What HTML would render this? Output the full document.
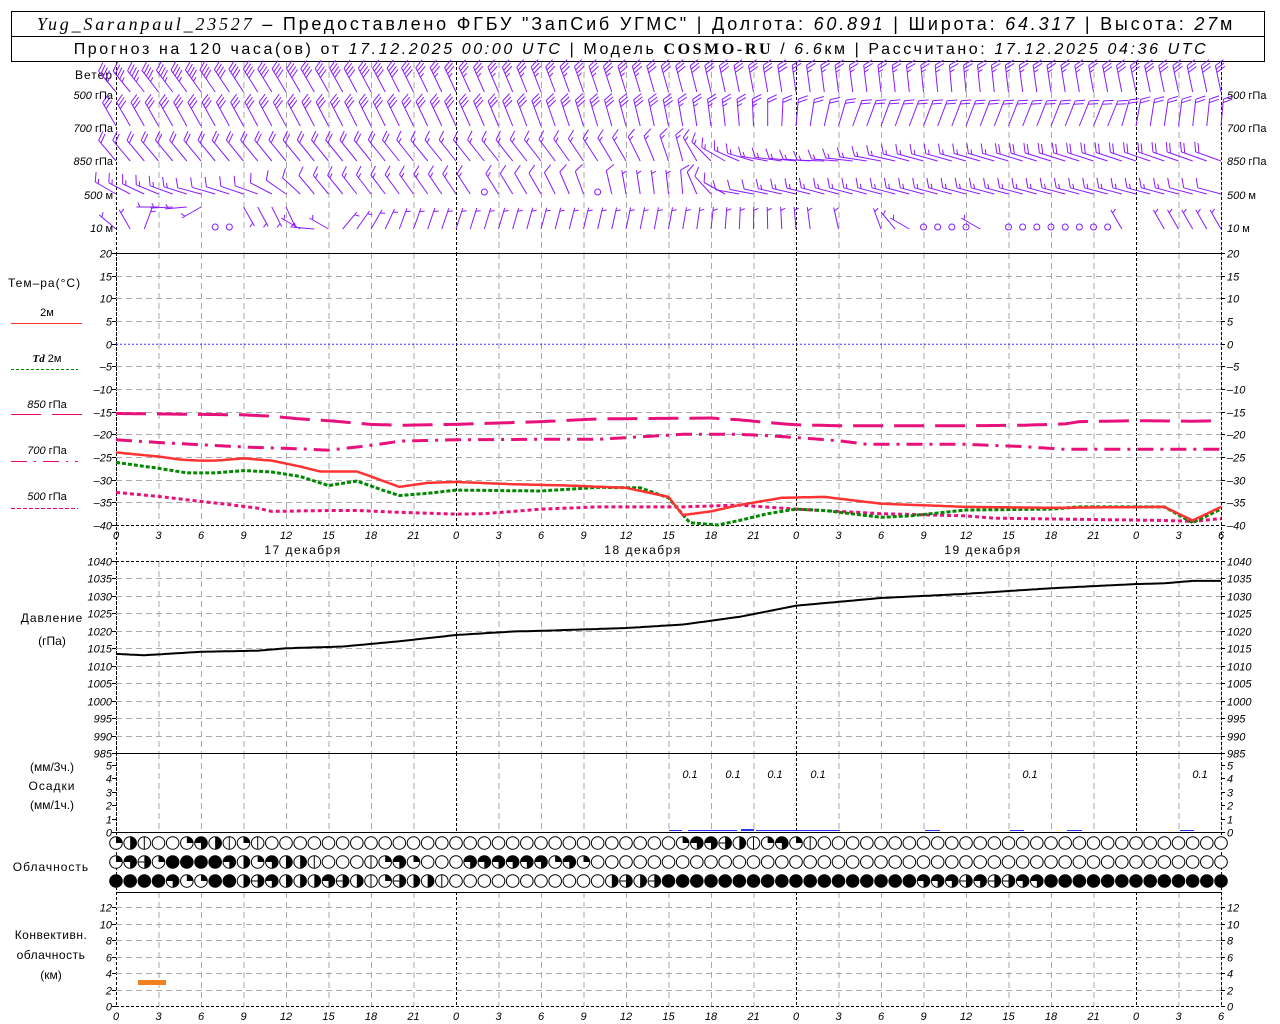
<!DOCTYPE html>
<html><head><meta charset="utf-8"><style>
html,body{margin:0;padding:0;background:#fff;width:1280px;height:1024px;overflow:hidden}
svg{display:block}
text{font-family:"Liberation Sans",sans-serif;fill:#000}
.ax{font-style:italic;font-size:11px}
.lb{font-size:12px}
</style></head><body>
<svg id="s" width="1280" height="1024" viewBox="0 0 1280 1024" xmlns="http://www.w3.org/2000/svg">
<rect x="11.5" y="11.5" width="1253" height="50" fill="none" stroke="#000"/>
<line x1="11" y1="36.5" x2="1265" y2="36.5" stroke="#000"/>
<text x="636" y="30" text-anchor="middle" font-size="18" letter-spacing="2.8"><tspan font-family="Liberation Serif" font-style="italic">Yug_Saranpaul_23527</tspan> – Предоставлено ФГБУ "ЗапСиб УГМС" | Долгота: <tspan font-style="italic">60.891</tspan> | Широта: <tspan font-style="italic">64.317</tspan> | Высота: <tspan font-style="italic">27</tspan>м</text>
<text x="641" y="54" text-anchor="middle" font-size="16" letter-spacing="2.6">Прогноз на 120 часа(ов) от <tspan font-style="italic">17.12.2025 00:00 UTC</tspan>  | Модель <tspan font-family="Liberation Serif" font-weight="bold">COSMO-RU</tspan> / <tspan font-style="italic">6.6</tspan>км | Рассчитано: <tspan font-style="italic">17.12.2025 04:36 UTC</tspan></text>

<g class="lb">
<text x="113" y="79" text-anchor="end" letter-spacing="1">Ветер</text>
<text x="8" y="287" letter-spacing="1">Тем–ра(°С)</text>
<text x="47" y="316" text-anchor="middle" font-size="11">2м</text>
<line x1="11" y1="323.5" x2="82" y2="323.5" stroke="#f33" stroke-width="1"/>
<text x="47" y="362" text-anchor="middle" font-size="11"><tspan font-style="italic" font-weight="bold" font-family="Liberation Serif">Td</tspan>  2м</text>
<line x1="11" y1="369.5" x2="78" y2="369.5" stroke="#080" stroke-dasharray="3,2"/>
<text x="47" y="408" text-anchor="middle" font-size="11"><tspan font-style="italic">850</tspan> гПа</text>
<line x1="11" y1="414.5" x2="82" y2="414.5" stroke="#e07" stroke-dasharray="30,11"/>
<text x="47" y="454" text-anchor="middle" font-size="11"><tspan font-style="italic">700</tspan> гПа</text>
<line x1="11" y1="461.5" x2="78" y2="461.5" stroke="#e07" stroke-dasharray="16,7,2,7"/>
<text x="47" y="500" text-anchor="middle" font-size="11"><tspan font-style="italic">500</tspan> гПа</text>
<line x1="11" y1="508.5" x2="78" y2="508.5" stroke="#e07" stroke-dasharray="4,2"/>
<text x="52" y="622" text-anchor="middle" letter-spacing="1">Давление</text>
<text x="52" y="645" text-anchor="middle">(гПа)</text>
<text x="52" y="771" text-anchor="middle">(мм/3ч.)</text>
<text x="52" y="790" text-anchor="middle" letter-spacing="1">Осадки</text>
<text x="52" y="809" text-anchor="middle">(мм/1ч.)</text>
<text x="51" y="871" text-anchor="middle" letter-spacing="1">Облачность</text>
<text x="51" y="939" text-anchor="middle" letter-spacing="0.5">Конвективн.</text>
<text x="51" y="959" text-anchor="middle" letter-spacing="0.5">облачность</text>
<text x="51" y="979" text-anchor="middle">(км)</text>
</g>
<g id="dyn"></g>
</svg>
<script>
var X0=116,HX=340/24;
function hx(h){return X0+h*HX;}
var o=[];
function L(x1,y1,x2,y2,st){o.push('<line x1="'+x1.toFixed(1)+'" y1="'+y1.toFixed(1)+'" x2="'+x2.toFixed(1)+'" y2="'+y2.toFixed(1)+'" '+st+'/>');}
function T(x,y,t,a,extra){o.push('<text class="ax" x="'+x+'" y="'+y+'" text-anchor="'+(a||'start')+'" '+(extra||'')+'>'+t+'</text>');}
var R=1221;
function vgrid(y1,y2){for(var h=0;h<=78;h+=3){var x=hx(h)+0.5;var day=(h%24==0);L(x,y1,x,y2,'stroke="'+(day?'#000':'#aaa')+'" stroke-dasharray="'+(day?'3,2':'6,4')+'"');}}
vgrid(62,253);vgrid(253,525);vgrid(561,753);vgrid(753,832);vgrid(892,1006);
L(R+0.5,62,R+0.5,1006,'stroke="#000" stroke-dasharray="3,2"');
L(X0+0.5,62,X0+0.5,1006,'stroke="#000" stroke-dasharray="3,2"');
function ty(t){return 253+(20-t)*272/60;}
for(var t=20;t>=-40;t-=5){var y=Math.round(ty(t))+0.5;
 if(t<20&&t>-40&&t!=0)L(X0,y,R,y,'stroke="#aaa" stroke-dasharray="6,4"');
 L(X0-4,y,X0,y,'stroke="#000"');L(R,y,R+4,y,'stroke="#000"');
 T(X0-4,y+4,t==0?'0':(t<0?'–'+(-t):t),'end');T(R+6,y+4,t==0?'0':(t<0?'–'+(-t):t));}
L(X0,ty(0)+0.5,R,ty(0)+0.5,'stroke="#33f" stroke-dasharray="2,2"');
L(X0,253.5,R,253.5,'stroke="#000"');L(X0,525.5,R,525.5,'stroke="#000" stroke-dasharray="3,2"');
function xlabels(y){for(var h=0;h<=78;h+=3){T(hx(h),y,String(h%24),'middle','font-size="13"');}}
xlabels(539);xlabels(1020);
T(303,554,'17 декабря','middle','style="font-style:normal;font-size:12px" letter-spacing="1.5"');
T(643,554,'18 декабря','middle','style="font-style:normal;font-size:12px" letter-spacing="1.5"');
T(983,554,'19 декабря','middle','style="font-style:normal;font-size:12px" letter-spacing="1.5"');
function py(p){return 561+(1040-p)*192/55;}
for(var p=1040;p>=985;p-=5){var y=Math.round(py(p))+0.5;
 if(p<1040&&p>985)L(X0,y,R,y,'stroke="#aaa" stroke-dasharray="6,4"');
 L(X0-4,y,X0,y,'stroke="#000"');L(R,y,R+4,y,'stroke="#000"');
 T(X0-4,y+4,p,'end','font-size="10"');T(R+6,y+4,p,'start','font-size="10"');}
L(X0,561.5,R,561.5,'stroke="#000" stroke-dasharray="3,2"');
L(X0,753.5,R,753.5,'stroke="#000"');
for(var k=0;k<=5;k++){var y=Math.round(832-k*13.4)+0.5;L(X0-4,y,X0,y,'stroke="#000"');L(R,y,R+4,y,'stroke="#000"');T(X0-4,y+4,k,'end','font-size="10"');T(R+6,y+4,k,'start','font-size="10"');}
L(X0,832.5,R,832.5,'stroke="#000"');
[690,733,775,818,1030,1200].forEach(function(x){T(x,778,'0.1','middle','font-size="12"');});
[[669,682,1],[688,737,1],[741,754,2],[756,840,1],[925,940,1],[1010,1024,1],[1067,1082,1],[1180,1194,1]].forEach(function(b){o.push('<rect x="'+b[0]+'" y="'+(831-b[2])+'" width="'+(b[1]-b[0])+'" height="'+b[2]+'" fill="#23f"/>');});
for(var k=0;k<=12;k+=2){var y=Math.round(1006-k*8.25)+0.5;
 if(k>0)L(X0,y,R,y,'stroke="#aaa" stroke-dasharray="6,4"');
 L(X0-4,y,X0,y,'stroke="#000"');L(R,y,R+4,y,'stroke="#000"');T(X0-4,y+4,k,'end','font-size="10"');T(R+6,y+4,k,'start','font-size="10"');}
L(X0,892.5,R,892.5,'stroke="#000"');L(X0,1006.5,R,1006.5,'stroke="#000" stroke-dasharray="3,2"');
o.push('<rect x="138" y="980" width="28" height="5" fill="#f08020"/>');
function interp(k,h){for(var i=0;i<k.length-1;i++){if(h<=k[i+1][0]){var f=(h-k[i][0])/(k[i+1][0]-k[i][0]);return k[i][1]+f*(k[i+1][1]-k[i][1]);}}return k[k.length-1][1];}
function curve(k,fy,st){var d='';for(var h=0;h<=78;h+=0.25){d+=(h==0?'M':'L')+hx(h).toFixed(1)+','+fy(interp(k,h)).toFixed(1);}o.push('<path d="'+d+'" fill="none" '+st+'/>');}
var t850=[[0,-15.4],[9,-15.7],[11,-16],[13,-16.6],[15,-17],[18,-17.8],[20,-18],[24,-17.8],[30,-17.2],[34,-16.6],[42,-16.4],[44,-16.8],[46,-17.4],[48,-17.9],[51,-18.1],[60,-18.1],[64,-18],[67,-17.7],[68,-17.2],[72,-17],[76,-17.1],[78,-17]];
var t700=[[0,-21.2],[3,-21.8],[9,-22.8],[13,-23.2],[15,-23.5],[17,-22.8],[19,-22],[20,-21.5],[24,-21.2],[30,-21.1],[34,-21.1],[40,-20],[44,-20],[46,-20.3],[48,-20.7],[51,-21.4],[53,-22.2],[60,-22.2],[64,-22.7],[67,-23.3],[78,-23.3]];
var t500=[[0,-32.8],[3,-33.7],[6,-34.8],[8,-35.5],[10,-36.3],[11,-37],[15,-36.8],[17,-36.8],[20,-37.2],[24,-37.6],[26,-37.5],[30,-36.5],[34,-36],[40,-36],[44,-35.6],[48,-36.5],[54,-37.5],[60,-38],[62,-38.5],[74,-39],[76,-39.2],[78,-38.6]];
var td=[[0,-26.2],[3,-27.5],[5,-28.5],[7,-28.5],[9,-28],[11,-28.3],[13,-29.3],[15,-31.3],[17,-30.3],[19,-32.5],[20,-33.5],[22,-33],[24,-32.3],[30,-32.5],[34,-31.7],[37,-31.8],[39,-34],[40.5,-39.5],[42.5,-40],[44,-39],[46,-37.5],[48,-36.5],[50,-36.8],[54,-38.3],[56,-38],[60,-36.7],[66,-36.5],[68,-36],[74,-36],[76,-39.5],[78,-36.5]];
var t2=[[0,-24],[3,-24.9],[4.6,-25.6],[6,-25.8],[7,-25.8],[9,-25.3],[11,-25.8],[13,-27.1],[14.4,-28.2],[17,-28.2],[18,-29.3],[20,-31.6],[22,-30.7],[24,-30.5],[28,-31],[32,-31.3],[36,-31.8],[39,-33.8],[40,-37.8],[42,-37],[44,-35.6],[47,-34],[50,-33.8],[54,-35.3],[60,-36],[66,-36.2],[74,-36],[76,-39],[78,-36]];
curve(t850,ty,'stroke="#e8107a" stroke-width="3" stroke-dasharray="30,11"');
curve(t700,ty,'stroke="#e8107a" stroke-width="3" stroke-dasharray="16,7,3,7"');
curve(t500,ty,'stroke="#e8107a" stroke-width="3" stroke-dasharray="4,3"');
curve(td,ty,'stroke="#080" stroke-width="3" stroke-dasharray="4,2"');
curve(t2,ty,'stroke="#f33" stroke-width="2.5"');
var pr=[[0,1013.4],[2,1013],[6,1014],[10,1014.3],[12,1015],[16,1015.5],[20,1017],[24,1018.8],[28,1019.8],[30,1020],[36,1020.8],[40,1021.8],[44,1024],[48,1027.2],[54,1029.4],[60,1030.6],[66,1032.2],[72,1033.4],[74,1033.6],[76,1034.3],[78,1034.3]];
curve(pr,py,'stroke="#000" stroke-width="2"');
var PC='#8a1aff';
function barb(x,y,d,sp,len){
 if(sp<2.5){o.push('<circle cx="'+x+'" cy="'+y+'" r="3" fill="none" stroke="'+PC+'"/>');return;}
 var r=d*Math.PI/180,ux=Math.sin(r),uy=-Math.cos(r);
 var tx=x+len*ux,ty2=y+len*uy;L(x,y,tx,ty2,'stroke="'+PC+'"');
 var fr=(d+65)*Math.PI/180,fx=Math.sin(fr),fy=-Math.cos(fr);
 var s=Math.round(sp/5)*5,pos=0,fl=10;
 while(s>=50){var ax=tx-ux*pos,ay=ty2-uy*pos,bx=tx-ux*(pos+5),by=ty2-uy*(pos+5);
  o.push('<polygon points="'+ax+','+ay+' '+(ax+fx*fl)+','+(ay+fy*fl)+' '+bx+','+by+'" fill="'+PC+'"/>');pos+=7;s-=50;}
 while(s>=10){var ax=tx-ux*pos,ay=ty2-uy*pos;L(ax,ay,ax+fx*fl,ay+fy*fl,'stroke="'+PC+'"');pos+=3.5;s-=10;}
 if(s>=5){if(pos==0)pos=3.5;var ax=tx-ux*pos,ay=ty2-uy*pos;L(ax,ay,ax+fx*fl/2,ay+fy*fl/2,'stroke="'+PC+'"');}
}
var rows=[
 {y:92,len:27,d:[[0,320],[10,328],[24,335],[40,345],[48,352],[60,355],[72,348],[78,348]],s:[[0,45],[12,40],[30,35],[44,30],[50,25],[62,25],[78,30]]},
 {y:126,len:27,d:[[0,330],[12,332],[24,335],[36,345],[44,355],[48,365],[52,380],[70,382],[72,370],[78,365]],s:[[0,30],[20,30],[36,30],[48,20],[78,20]]},
 {y:161,len:27,d:[[0,320],[30,322],[36,330],[40,345],[43,300],[46,280],[50,272],[56,285],[78,290]],s:[[0,20],[40,15],[50,15],[78,20]]},
 {y:194,len:24,d:[[0,300],[6,285],[10,290],[14,320],[30,330],[36,350],[40,355],[44,280],[50,285],[78,285]],s:[[0,15],[10,10],[20,15],[34,10],[36,5],[44,10],[50,15],[72,15],[78,10]]},
 {y:229,len:22,d:[[0,310],[1,330],[2,380],[3,270],[5,265],[6,240],[9,150],[12,155],[13,300],[14,275],[15,300],[16,400],[20,380],[40,370],[48,355],[54,340],[56,300],[61,300],[71,330],[78,330]],s:[[0,5],[78,5]]}
];
var calm=[[3,26],[3,34],[4,7],[4,8],[4,57],[4,58],[4,59],[4,60],[4,63],[4,64],[4,65],[4,66],[4,67],[4,68],[4,69],[4,70]];
for(var ri=0;ri<rows.length;ri++){var rw=rows[ri];
 for(var h=0;h<=78;h++){var isc=calm.some(function(c){return c[0]==ri&&c[1]==h;});
  var sp=isc?0:interp(rw.s,h);var yy=isc?rw.y-2:rw.y;
  if(ri==4&&!isc&&(h==50||h==52||h==53||h==62||h==72||h==73))continue;
  var dd=interp(rw.d,h);var yb=yy;
  if(ri==4&&!isc){var c=Math.cos(dd*Math.PI/180);if(c<0)yb=yy-22;}
  barb(hx(h),yb,dd,sp,rw.len);}}
T(113,99,'500 <tspan style="font-style:normal">гПа</tspan>','end','font-size="10"');
T(113,132,'700 <tspan style="font-style:normal">гПа</tspan>','end','font-size="10"');
T(113,165,'850 <tspan style="font-style:normal">гПа</tspan>','end','font-size="10"');
T(113,199,'500 <tspan style="font-style:normal">м</tspan>','end','font-size="10"');
T(113,232,'10  <tspan style="font-style:normal">м</tspan>','end','font-size="10"');
T(1227,99,'500 <tspan style="font-style:normal">гПа</tspan>','start','font-size="10"');
T(1227,132,'700 <tspan style="font-style:normal">гПа</tspan>','start','font-size="10"');
T(1227,165,'850 <tspan style="font-style:normal">гПа</tspan>','start','font-size="10"');
T(1227,199,'500 <tspan style="font-style:normal">м</tspan>','start','font-size="10"');
T(1227,232,'10  <tspan style="font-style:normal">м</tspan>','start','font-size="10"');
function mk(spec){var a=[];for(var i=0;i<79;i++)a.push(0);spec.forEach(function(s){for(var i=0;i<s[2].length;i++)a[s[0]+i]=+s[2][i];});return a;}
var c1=mk([[0,0,'24100264121'],[40,0,'2665412621']]);
var c2=mk([[0,0,'265288886426441000126200066666626200']]);
var c3=mk([[0,0,'888862288456444654125441'],[35,0,'4545888888888888888888666565566'],[66,0,'8888888888888']]);
function cloud(x,y,t){var r=6.3;
 o.push('<circle cx="'+x+'" cy="'+y+'" r="'+r+'" fill="#fff" stroke="#000"/>');
 if(t==8){o.push('<circle cx="'+x+'" cy="'+y+'" r="'+r+'" fill="#000"/>');return;}
 if(t==1)L(x,y-r,x,y+r,'stroke="#000"');
 if(t==2)o.push('<path d="M'+x+','+y+'V'+(y-r)+'A'+r+','+r+' 0 0 1 '+(x+r)+','+y+'Z" fill="#000"/>');
 if(t==4||t==5)o.push('<path d="M'+x+','+(y-r)+'A'+r+','+r+' 0 0 1 '+x+','+(y+r)+'Z" fill="#000"/>');
 if(t==5)L(x-r,y,x,y,'stroke="#000"');
 if(t==6)o.push('<path d="M'+x+','+y+'H'+(x-r)+'A'+r+','+r+' 0 1 1 '+x+','+(y+r)+'Z" fill="#000"/>');
}
for(var i=0;i<79;i++){var x=hx(i);cloud(x,843,c1[i]);cloud(x,862,c2[i]);cloud(x,881,c3[i]);}
document.getElementById('dyn').innerHTML=o.join('');
</script>
</body></html>
